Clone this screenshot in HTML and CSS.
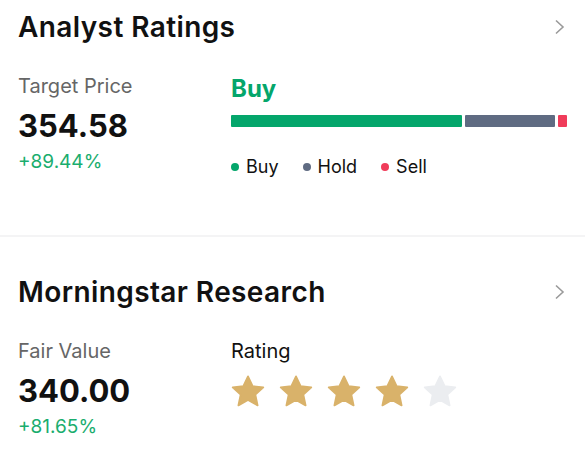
FILE: index.html
```html
<!DOCTYPE html>
<html lang="en">
<head>
  <meta charset="UTF-8">
  <meta name="viewport" content="width=device-width, initial-scale=1.0">
  <title>Ratings</title>
  <link rel="stylesheet" href="styles.css">
</head>
<body>
  <!-- Analyst Ratings -->
  <section class="card card-first">
    <div class="card-head">
      <h2>Analyst Ratings</h2>
      <svg class="chevron" width="12" height="16" viewBox="0 0 12 16">
        <path d="M2 1.5 L9 8 L2 14.5" fill="none" stroke="#9a9a9a" stroke-width="1.6"/>
      </svg>
    </div>
    <div class="card-body">
      <div class="col-left">
        <div class="label">Target Price</div>
        <div class="value">354.58</div>
        <div class="change">+89.44%</div>
      </div>
      <div class="col-right">
        <div class="verdict">Buy</div>
        <div class="bar">
          <span class="seg seg-buy" style="width: 231px"></span>
          <span class="seg seg-hold" style="width: 90px"></span>
          <span class="seg seg-sell" style="width: 9px"></span>
        </div>
        <div class="legend">
          <span class="key"><i class="dot dot-buy"></i>Buy</span>
          <span class="key"><i class="dot dot-hold"></i>Hold</span>
          <span class="key"><i class="dot dot-sell"></i>Sell</span>
        </div>
      </div>
    </div>
  </section>

  <div class="divider"></div>

  <!-- Morningstar -->
  <section class="card card-second">
    <div class="card-head">
      <h2>Morningstar Research</h2>
      <svg class="chevron" width="12" height="16" viewBox="0 0 12 16">
        <path d="M2 1.5 L9 8 L2 14.5" fill="none" stroke="#9a9a9a" stroke-width="1.6"/>
      </svg>
    </div>
    <div class="card-body">
      <div class="col-left">
        <div class="label">Fair Value</div>
        <div class="value">340.00</div>
        <div class="change">+81.65%</div>
      </div>
      <div class="col-right">
        <div class="rating-label">Rating</div>
        <div class="stars">
          <svg class="star on" viewBox="0 0 24 24"><path d="M12 1.6 L15.1 8.1 L22.2 8.9 L16.9 13.8 L18.4 20.9 L12 17.3 L5.6 20.9 L7.1 13.8 L1.8 8.9 L8.9 8.1 Z" stroke-linejoin="round" stroke-width="1.2"/></svg>
          <svg class="star on" viewBox="0 0 24 24"><path d="M12 1.6 L15.1 8.1 L22.2 8.9 L16.9 13.8 L18.4 20.9 L12 17.3 L5.6 20.9 L7.1 13.8 L1.8 8.9 L8.9 8.1 Z" stroke-linejoin="round" stroke-width="1.2"/></svg>
          <svg class="star on" viewBox="0 0 24 24"><path d="M12 1.6 L15.1 8.1 L22.2 8.9 L16.9 13.8 L18.4 20.9 L12 17.3 L5.6 20.9 L7.1 13.8 L1.8 8.9 L8.9 8.1 Z" stroke-linejoin="round" stroke-width="1.2"/></svg>
          <svg class="star on" viewBox="0 0 24 24"><path d="M12 1.6 L15.1 8.1 L22.2 8.9 L16.9 13.8 L18.4 20.9 L12 17.3 L5.6 20.9 L7.1 13.8 L1.8 8.9 L8.9 8.1 Z" stroke-linejoin="round" stroke-width="1.2"/></svg>
          <svg class="star off" viewBox="0 0 24 24"><path d="M12 1.6 L15.1 8.1 L22.2 8.9 L16.9 13.8 L18.4 20.9 L12 17.3 L5.6 20.9 L7.1 13.8 L1.8 8.9 L8.9 8.1 Z" stroke-linejoin="round" stroke-width="1.2"/></svg>
        </div>
      </div>
    </div>
  </section>
</body>
</html>
```

FILE: styles.css
```css
/* Base */
body {
  margin: 0;
  background: #fff;
  color: #111;
  font-family: Inter, "Noto Sans", Arial, sans-serif;
}

.card {
  padding: 0 18px;
}

.card-first {
  padding-top: 9px;
  height: 226px;
}

.card-second {
  padding-top: 37px;
}

.divider {
  height: 2px;
  background-color: #f4f4f5;
}

/* Header */
.card-head {
  display: flex;
  justify-content: space-between;
  align-items: center;
}

.card-head h2 {
  margin: 0;
  font-size: 28px;
  line-height: 36px;
  font-weight: 600;
  letter-spacing: 0.4px;
  color: #111;
}

.chevron {
  display: block;
  margin-right: 1px;
}

/* Body */
.card-body {
  display: flex;
  margin-top: 29px;
}

.col-left {
  width: 213px;
}

.col-right {
  flex: 1;
}

.label {
  font-size: 20px;
  line-height: 24px;
  color: #666;
}

.value {
  margin-top: 10px;
  font-size: 31px;
  line-height: 36px;
  font-weight: 700;
  color: #111;
}

.change {
  margin-top: 6px;
  font-size: 19px;
  line-height: 24px;
  color: #1aad6e;
}

/* Verdict + bar */
.verdict {
  margin-top: 1px;
  font-size: 24px;
  line-height: 28px;
  font-weight: 700;
  color: #04a66b;
}

.bar {
  display: flex;
  gap: 3px;
  margin-top: 12px;
  height: 12px;
}

.seg {
  display: block;
  height: 100%;
  border-radius: 1px;
}

.seg-buy { background-color: #04a66b; }
.seg-hold { background-color: #5f6b82; }
.seg-sell { background-color: #f03c5a; }

.legend {
  display: flex;
  gap: 24px;
  margin-top: 28px;
  font-size: 18px;
  line-height: 24px;
  color: #111;
}

.key {
  display: flex;
  align-items: center;
}

.dot {
  display: inline-block;
  width: 8px;
  height: 8px;
  border-radius: 50%;
  margin-right: 7px;
}

.dot-buy { background-color: #04a66b; }
.dot-hold { background-color: #5f6b82; }
.dot-sell { background-color: #f03c5a; }

/* Rating */
.rating-label {
  font-size: 20px;
  line-height: 24px;
  color: #111;
}

.stars {
  display: flex;
  gap: 12px;
  margin-top: 11px;
  margin-left: -1px;
}

.star {
  width: 36px;
  height: 36px;
}

.star.on path {
  fill: #d9b26a;
  stroke: #d9b26a;
}

.star.off path {
  fill: #ebedf0;
  stroke: #ebedf0;
}
```
